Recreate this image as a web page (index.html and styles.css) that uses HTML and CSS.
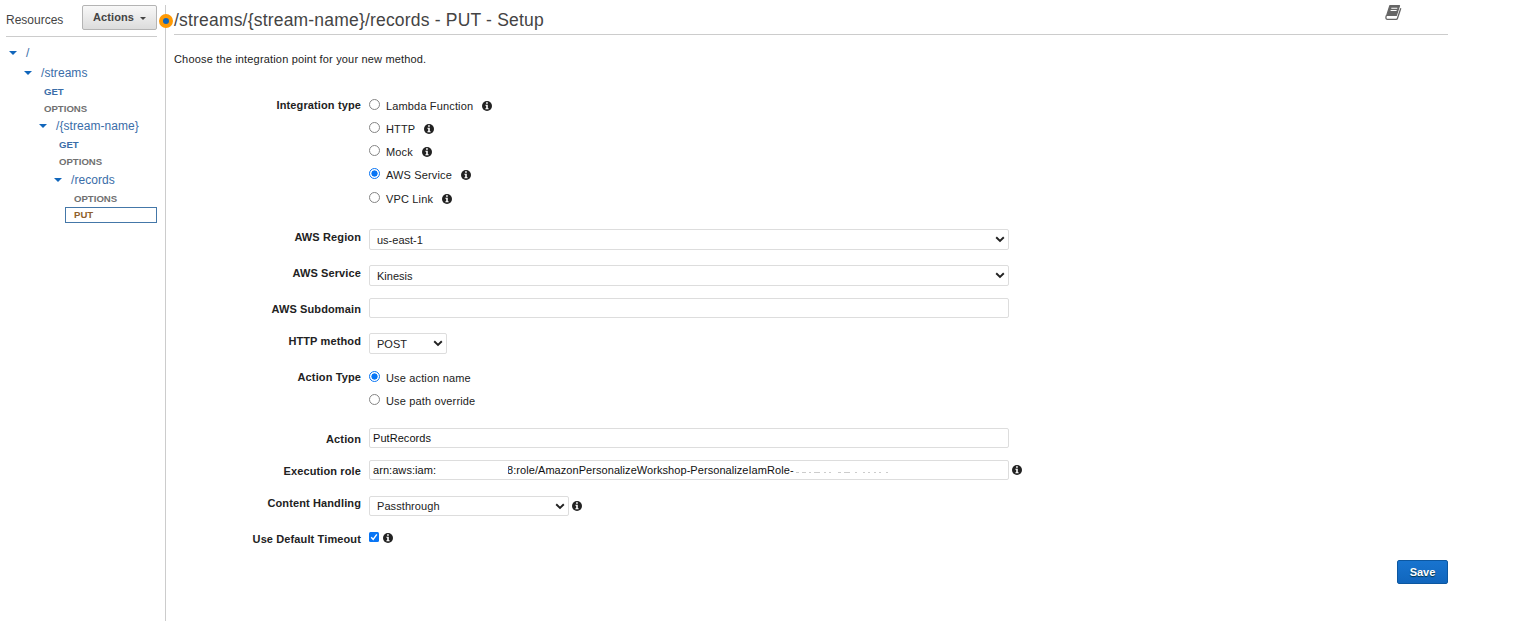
FILE: index.html
```html
<!DOCTYPE html>
<html lang="en">
<head>
<meta charset="utf-8">
<title>Method setup</title>
<link rel="stylesheet" href="styles.css">
</head>
<body>
<svg class="defs" width="0" height="0" aria-hidden="true">
  <symbol id="info" viewBox="0 0 10 10"><circle cx="5" cy="5" r="5" fill="#222"/><path fill="#fff" d="M4.100 1.200h1.700v1.500H4.100zM3.400 3.700h2.400v3.500h.8v1H3.400v-1h.8V4.700h-.8z"/></symbol>
  <symbol id="chev" viewBox="0 0 10 7"><path d="M1.200 1.300 5 5l3.800-3.700" fill="none" stroke="#222" stroke-width="1.900"/></symbol>
  <symbol id="tri" viewBox="0 0 8 4"><path d="M0 0h8L4 4z" fill="#1166bb"/></symbol>
</svg>
<div class="app">
  <aside class="sidebar">
    <div class="side-head"><span class="side-title">Resources</span><button class="actions">Actions<svg width="6" height="3" viewBox="0 0 6 3"><path d="M0 0h6L3 3z" fill="#444"/></svg></button></div>
    <nav class="tree">
      <div class="node d0"><svg><use href="#tri"/></svg><span>/</span></div>
      <div class="node d1"><svg><use href="#tri"/></svg><span>/streams</span></div>
      <div class="verb v1 get">GET</div>
      <div class="verb v1">OPTIONS</div>
      <div class="node d2"><svg><use href="#tri"/></svg><span>/{stream-name}</span></div>
      <div class="verb v2 get">GET</div>
      <div class="verb v2">OPTIONS</div>
      <div class="node d3"><svg><use href="#tri"/></svg><span>/records</span></div>
      <div class="verb v3">OPTIONS</div>
      <div class="verb selected">PUT</div>
    </nav>
  </aside>
  <div class="divider"><span class="handle"></span></div>
  <main class="main">
    <header class="head"><h1><span>/streams/{stream-name}/records - PUT - Setup</span></h1>
      <svg class="book" width="17" height="16" viewBox="0 0 17 16"><path d="M4.800.7h9.700L11.300 10.500H1.700z" fill="#666" stroke="#666" stroke-width="1.200" stroke-linejoin="round"/><path d="M6.300 3.300h6M5.600 5.500h6" stroke="#fff" stroke-width="1.100"/><path d="M1.500 10.300c-1 2-.8 4 .8 4h8.900c.6 0 1-.2 1.200-.8l3.400-10.300" fill="none" stroke="#666" stroke-width="1.300"/><path d="M2.600 12.500h8.300" stroke="#fff" stroke-width="1"/></svg>
    </header>
    <p class="intro"><span>Choose the integration point for your new method.</span></p>
    <form class="form">
      <div class="row r-type"><label>Integration type</label><div class="options">
        <div class="opt"><i class="radio"></i><span>Lambda Function</span><svg class="info"><use href="#info"/></svg></div>
        <div class="opt"><i class="radio"></i><span>HTTP</span><svg class="info"><use href="#info"/></svg></div>
        <div class="opt"><i class="radio"></i><span>Mock</span><svg class="info"><use href="#info"/></svg></div>
        <div class="opt"><i class="radio on"></i><span>AWS Service</span><svg class="info"><use href="#info"/></svg></div>
        <div class="opt last"><i class="radio"></i><span>VPC Link</span><svg class="info"><use href="#info"/></svg></div>
      </div></div>
      <div class="row r-region"><label>AWS Region</label><div class="select"><span>us-east-1</span><svg class="chev"><use href="#chev"/></svg></div></div>
      <div class="row r-service"><label>AWS Service</label><div class="select"><span>Kinesis</span><svg class="chev"><use href="#chev"/></svg></div></div>
      <div class="row r-sub"><label>AWS Subdomain</label><div class="input"></div></div>
      <div class="row r-method"><label>HTTP method</label><div class="select small"><span>POST</span><svg class="chev"><use href="#chev"/></svg></div></div>
      <div class="row r-atype"><label>Action Type</label><div class="options">
        <div class="opt"><i class="radio on"></i><span>Use action name</span></div>
        <div class="opt"><i class="radio"></i><span>Use path override</span></div>
      </div></div>
      <div class="row r-action"><label>Action</label><div class="input"><span>PutRecords</span></div></div>
      <div class="row r-role"><label>Execution role</label><div class="input"><span class="arn">arn:aws:iam:</span><span class="role"><b>8:role/AmazonPersonalizeWorkshop-PersonalizeIamRole-</b></span><svg class="residue" width="96" height="3" viewBox="0 0 96 3"><path d="M1 1.500h3M7 1.500h4M14 1.500h2M19 1.500h6M29 1.500h2M34 1.500h2M43 1.500h3M49 1.500h6M60 1.500h2M68 1.500h2M73 1.500h2M79 1.500h2M84 1.500h2M91 1.500h2" stroke="#ccc"/></svg></div><svg class="info"><use href="#info"/></svg></div>
      <div class="row r-content"><label>Content Handling</label><div class="select medium"><span>Passthrough</span><svg class="chev"><use href="#chev"/></svg></div><svg class="info"><use href="#info"/></svg></div>
      <div class="row r-timeout"><label>Use Default Timeout</label><svg class="check" width="10" height="10" viewBox="0 0 10 10"><rect width="10" height="10" rx="1.500" fill="#0875f5"/><path d="m2.200 5.200 2 2.200 3.600-5" fill="none" stroke="#fff" stroke-width="1.400"/></svg><svg class="info"><use href="#info"/></svg></div>
      <div class="foot"><button class="save" type="button">Save</button></div>
    </form>
  </main>
</div>
</body>
</html>
```
FILE: styles.css
```css
* { box-sizing: border-box; }
body { margin: 0; background: #fff; color: #222; font: 11px/16px "Liberation Sans", Arial, sans-serif; overflow: hidden; }
.defs { display: block; height: 0; }
.app { display: flex; height: 621px; }
svg { flex: none; }

.sidebar { width: 165px; padding: 5px 8px 0 6px; }
.side-head { display: flex; justify-content: space-between; height: 32px; border-bottom: 1px solid #ccc; }
.side-title { font-size: 12px; line-height: 30px; color: #444; }
.actions { display: flex; align-items: center; justify-content: center; gap: 6px; width: 75px; height: 25px; padding: 0 0 2px; border: 1px solid #b4b4b4; border-radius: 2px; background: linear-gradient(#f8f8f8, #dcdcdc); font: bold 11px "Liberation Sans", Arial, sans-serif; letter-spacing: .1px; color: #444; }
.actions svg { margin-top: 3px; }
.tree { padding-top: 6px; }
.node { display: flex; align-items: center; gap: 9px; height: 20px; font-size: 12px; letter-spacing: .06px; color: #3a6da8; }
.node svg { width: 8px; height: 4px; }
.d0 { padding-left: 3px; }
.d1 { padding-left: 18px; }
.d2 { padding-left: 33px; height: 18px; }
.d3 { padding-left: 48px; height: 20px; }
.verb { height: 17px; font-weight: bold; font-size: 9.600px; line-height: 17px; color: #707070; }
.get { color: #3a6da8; }
.v1 { padding-left: 38px; }
.v2 { padding-left: 53px; }
.v2.get { height: 18px; line-height: 19px; }
.v3 { padding-left: 68px; }
.selected { height: 16px; margin-left: 59px; padding-left: 8px; border: 1px solid #4477a8; line-height: 14px; color: #8f5f2c; }

.divider { width: 1px; margin-top: 5px; background: #ccc; }
.handle { position: relative; display: block; left: -6px; top: 9px; width: 14px; height: 14px; border: 4px solid #ff9a05; border-radius: 50%; background: #1166bb; }

.main { width: 1282px; padding-left: 8px; }
.head { display: flex; justify-content: space-between; height: 35px; border-bottom: 1px solid #ccc; }
h1 { margin: 0; font-size: 17.500px; font-weight: normal; letter-spacing: .19px; line-height: 40px; color: #444; white-space: nowrap; }
.book { margin: 5px 46px 0 0; }
.intro { margin: 16px 0 0; height: 43px; letter-spacing: .17px; }
.row { display: flex; align-items: flex-start; }
.row label { width: 187px; margin-right: 8px; font-weight: bold; letter-spacing: .12px; text-align: right; white-space: nowrap; }
.r-type { height: 135px; }
.r-type label { margin-top: 3px; }
.opt { display: flex; height: 23px; }
.opt.last { padding-top: 1px; }
.opt span { margin: 4px 0 0 6px; letter-spacing: .15px; }
.radio { width: 11px; height: 11px; margin-top: 5px; border: 1px solid #858585; border-radius: 50%; background: #fff; }
.radio.on { border-color: #0875f5; background: radial-gradient(circle, #0875f5 0 2.800px, #fff 3.400px); }
.info { width: 10px; height: 10px; }
.opt .info { margin: 7px 0 0 9px; }
.select, .input { display: flex; width: 640px; border: 1px solid #ddd; border-radius: 2px; white-space: nowrap; }
.select { height: 21px; padding: 0 3px 0 7px; justify-content: space-between; line-height: 21px; }
.input { height: 20px; padding-left: 3px; line-height: 18px; letter-spacing: .06px; color: #111; }
.chev { width: 10px; height: 7px; margin-top: 6px; }
.small { width: 78px; }
.medium { width: 200px; height: 20px; line-height: 19px; letter-spacing: .08px; }
.r-region { height: 36px; }
.r-service { height: 33px; }
.r-sub { height: 35px; }
.r-sub label { margin-top: 3px; }
.r-method { height: 33px; }
.r-atype { height: 62px; }
.r-atype label { margin-top: 3px; }
.r-action { height: 32px; }
.r-action label, .r-role label { margin-top: 3px; }
.r-role { height: 36px; }
.r-role > .info, .r-content > .info { margin: 5px 0 0 3px; }
.arn { width: 135px; }
.role { display: flex; width: 287px; overflow: hidden; }
.role b { font-weight: normal; margin-left: -1px; }
.residue { margin-top: 10px; }
.r-content { height: 35px; }
.r-content label { margin-top: -1px; }
.r-content > .info { margin-left: 3px; }
.r-timeout { height: 29px; }
.check { margin-top: 1px; }
.r-timeout .info { margin: 2px 0 0 4px; }
.foot { display: flex; justify-content: flex-end; }
.save { width: 51px; height: 24px; padding: 0; border: 1px solid #0c57a0; border-radius: 2px; background: linear-gradient(#1874cf, #1166bd); color: #fff; font: bold 11px "Liberation Sans", Arial, sans-serif; text-shadow: 0 1px 1px #034; }
```
